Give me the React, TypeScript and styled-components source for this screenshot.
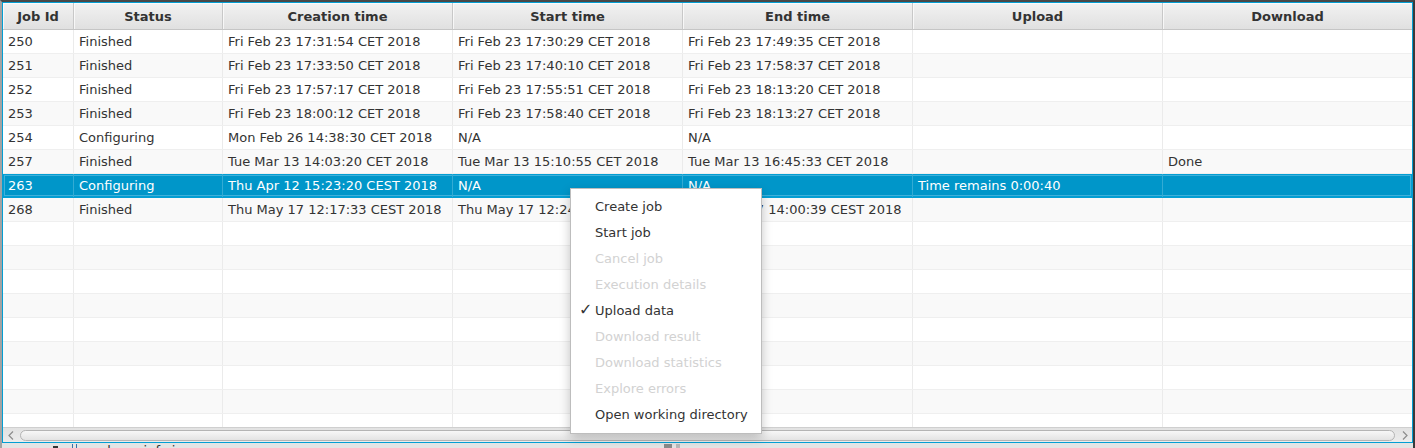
import React from "react";
import styled, { createGlobalStyle } from "styled-components";

const GlobalStyle = createGlobalStyle`
  html, body { margin: 0; padding: 0; background: #3c3c3c; overflow: hidden; }
  * { box-sizing: border-box; }
`;

const FONT = `"DejaVu Sans", "Liberation Sans", sans-serif`;

const Frame = styled.div`
  width: 1415px;
  height: 448px;
  overflow: hidden;
  display: flex;
  flex-direction: column;
  background: #e6e6e6;
  border-top: 2px solid #484848;
  border-left: 2px solid #a3a3a3;
  border-right: 2px solid #3a3a3a;
  font-family: ${FONT};
  font-size: 13px;
  color: #333;
`;

const Table = styled.div`
  flex: none;
  width: 1411px;
  height: 441px;
  border: 1px solid #039ed3;
  background: #fff;
  display: flex;
  flex-direction: column;
  overflow: hidden;
`;

const Header = styled.div`
  flex: none;
  height: 27px;
  display: flex;
  background: linear-gradient(to bottom, #f2f2f2, #e0e0e0);
  border-bottom: 1px solid #c5c5c5;
`;

const HeaderCell = styled.div<{ $w: number }>`
  flex: none;
  width: ${(p) => p.$w}px;
  height: 100%;
  display: flex;
  align-items: center;
  justify-content: center;
  font-weight: bold;
  color: #333;
  border-right: 1px solid #c8c8c8;
  box-shadow: inset 1px 1px 0 rgba(255, 255, 255, 0.7);
  &:last-child { border-right: none; }
`;

const Body = styled.div`
  flex: 1;
  overflow: hidden;
  display: flex;
  flex-direction: column;
`;

const Row = styled.div<{ $alt: boolean; $selected?: boolean }>`
  flex: none;
  height: 24px;
  display: flex;
  background: ${(p) => (p.$selected ? "#0096c9" : p.$alt ? "#f9f9f9" : "#ffffff")};
  border-bottom: 1px solid ${(p) => (p.$selected ? "#039ed3" : "#efefef")};
  color: ${(p) => (p.$selected ? "#ffffff" : "#333333")};
  box-shadow: ${(p) =>
    p.$selected ? "inset 0 0 0 1px #039ed3, inset 0 0 0 2px #3fb0da" : "none"};
`;

const Cell = styled.div<{ $w: number; $selected?: boolean }>`
  flex: none;
  width: ${(p) => p.$w}px;
  height: 100%;
  padding-left: 5px;
  display: flex;
  align-items: center;
  white-space: nowrap;
  overflow: hidden;
  border-right: 1px solid ${(p) => (p.$selected ? "#33abd4" : "#ebebeb")};
  &:last-child { border-right: none; }
`;

const ScrollBar = styled.div`
  flex: none;
  height: 15px;
  display: flex;
  align-items: center;
  background: linear-gradient(to bottom, #e2e2e2, #ececec);
  border-top: 1px solid #cfcfcf;
`;

const Arrow = styled.div`
  flex: none;
  width: 15px;
  height: 100%;
  display: flex;
  align-items: center;
  justify-content: center;
`;

const Thumb = styled.div`
  flex: 1;
  height: 11px;
  margin: 0 2px;
  border: 1px solid #b4b4b4;
  border-radius: 6px;
  background: linear-gradient(to bottom, #f7f7f7, #e3e3e3);
`;

const BottomStrip = styled.div`
  flex: 1;
  display: flex;
  align-items: flex-start;
  padding-top: 1px;
  background: #e4e4e4;
`;

const TreeIcon = styled.div`
  flex: none;
  width: 5px;
  height: 6px;
  margin-left: 51px;
  margin-top: 2px;
  background: #333;
`;

const FileIcon = styled.div`
  flex: none;
  width: 5px;
  height: 8px;
  margin-left: 14px;
  border: 1px solid #3a6fa8;
  border-top: none;
`;

const FileName = styled.span`
  flex: none;
  width: 580px;
  margin-left: 7px;
  line-height: 13px;
  color: #333;
`;

const Grip = styled.div`
  flex: none;
  width: 12px;
  height: 6px;
  background: #8a8a8a;
  border-right: 4px solid #e4e4e4;
  box-shadow: 4px 0 0 #b8b8b8;
`;

const Menu = styled.div`
  position: absolute;
  left: 570px;
  top: 188px;
  width: 192px;
  padding: 4px 0 6px;
  background: #ffffff;
  border: 1px solid #bdbdbd;
  box-shadow: 0 4px 10px rgba(0, 0, 0, 0.22);
  font-family: ${FONT};
  font-size: 13px;
  display: flex;
  flex-direction: column;
`;

const MenuItem = styled.div<{ $disabled?: boolean }>`
  height: 26px;
  display: flex;
  align-items: center;
  white-space: nowrap;
  color: ${(p) => (p.$disabled ? "#d2d2d2" : "#333333")};
`;

const Check = styled.span`
  flex: none;
  width: 24px;
  padding-left: 8px;
  color: #333;
  font-size: 16px;
  line-height: 16px;
`;

const cols = [
  { title: "Job Id", w: 71 },
  { title: "Status", w: 149 },
  { title: "Creation time", w: 230 },
  { title: "Start time", w: 230 },
  { title: "End time", w: 230 },
  { title: "Upload", w: 250 },
  { title: "Download", w: 249 },
];

type RowData = string[];

const data: RowData[] = [
  ["250", "Finished", "Fri Feb 23 17:31:54 CET 2018", "Fri Feb 23 17:30:29 CET 2018", "Fri Feb 23 17:49:35 CET 2018", "", ""],
  ["251", "Finished", "Fri Feb 23 17:33:50 CET 2018", "Fri Feb 23 17:40:10 CET 2018", "Fri Feb 23 17:58:37 CET 2018", "", ""],
  ["252", "Finished", "Fri Feb 23 17:57:17 CET 2018", "Fri Feb 23 17:55:51 CET 2018", "Fri Feb 23 18:13:20 CET 2018", "", ""],
  ["253", "Finished", "Fri Feb 23 18:00:12 CET 2018", "Fri Feb 23 17:58:40 CET 2018", "Fri Feb 23 18:13:27 CET 2018", "", ""],
  ["254", "Configuring", "Mon Feb 26 14:38:30 CET 2018", "N/A", "N/A", "", ""],
  ["257", "Finished", "Tue Mar 13 14:03:20 CET 2018", "Tue Mar 13 15:10:55 CET 2018", "Tue Mar 13 16:45:33 CET 2018", "", "Done"],
  ["263", "Configuring", "Thu Apr 12 15:23:20 CEST 2018", "N/A", "N/A", "Time remains 0:00:40", ""],
  ["268", "Finished", "Thu May 17 12:17:33 CEST 2018", "Thu May 17 12:24:05 CEST 2018", "Thu May 17 14:00:39 CEST 2018", "", ""],
];

const SELECTED = 6;
const TOTAL_ROWS = 17;

const menuItems: { label: string; disabled?: boolean; checked?: boolean }[] = [
  { label: "Create job" },
  { label: "Start job" },
  { label: "Cancel job", disabled: true },
  { label: "Execution details", disabled: true },
  { label: "Upload data", checked: true },
  { label: "Download result", disabled: true },
  { label: "Download statistics", disabled: true },
  { label: "Explore errors", disabled: true },
  { label: "Open working directory" },
];

const Chevron: React.FC<{ dir: "left" | "right" }> = ({ dir }) => (
  <svg width="6" height="9" viewBox="0 0 6 9">
    <path
      d={dir === "left" ? "M5 0.5 L1 4.5 L5 8.5" : "M1 0.5 L5 4.5 L1 8.5"}
      fill="none"
      stroke="#8c8c8c"
      strokeWidth="1.2"
    />
  </svg>
);

export default function App() {
  const rows = Array.from({ length: TOTAL_ROWS }, (_, i) => data[i] ?? cols.map(() => ""));
  return (
    <>
      <GlobalStyle />
      <Frame>
        <Table>
          <Header>
            {cols.map((c) => (
              <HeaderCell key={c.title} $w={c.w}>
                {c.title}
              </HeaderCell>
            ))}
          </Header>
          <Body>
            {rows.map((r, i) => {
              const sel = i === SELECTED;
              return (
                <Row key={i} $alt={i % 2 === 1} $selected={sel}>
                  {cols.map((c, j) => (
                    <Cell key={c.title} $w={c.w} $selected={sel}>
                      {r[j]}
                    </Cell>
                  ))}
                </Row>
              );
            })}
          </Body>
          <ScrollBar>
            <Arrow>
              <Chevron dir="left" />
            </Arrow>
            <Thumb />
            <Arrow>
              <Chevron dir="right" />
            </Arrow>
          </ScrollBar>
        </Table>
        <BottomStrip>
          <TreeIcon />
          <FileIcon />
          <FileName>package-info.java</FileName>
          <Grip />
        </BottomStrip>
      </Frame>
      <Menu>
        {menuItems.map((m) => (
          <MenuItem key={m.label} $disabled={m.disabled}>
            <Check>{m.checked ? "✓" : ""}</Check>
            {m.label}
          </MenuItem>
        ))}
      </Menu>
    </>
  );
}
